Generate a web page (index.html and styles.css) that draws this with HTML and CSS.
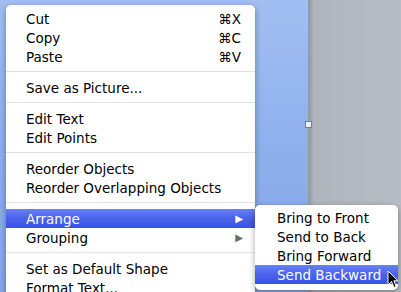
FILE: index.html
```html
<!DOCTYPE html>
<html lang="en">
<head>
    <meta charset="UTF-8">
    <title>Context Menu</title>
    <link rel="stylesheet" href="styles.css">
</head>
<body>
    <div class="desk">
        <div class="slide-area"><span class="handle"></span></div>
        <div class="edge"></div>
        <div class="grey-area"></div>
    </div>

    <ul class="menu">
        <li class="item">Cut<span class="key">&#8984;X</span></li>
        <li class="item">Copy<span class="key">&#8984;C</span></li>
        <li class="item">Paste<span class="key">&#8984;V</span></li>
        <li class="sep"></li>
        <li class="item">Save as Picture...</li>
        <li class="sep"></li>
        <li class="item">Edit Text</li>
        <li class="item">Edit Points</li>
        <li class="sep"></li>
        <li class="item">Reorder Objects</li>
        <li class="item">Reorder Overlapping Objects</li>
        <li class="sep"></li>
        <li class="item active">Arrange<span class="arrow">&#9654;</span></li>
        <li class="item">Grouping<span class="arrow">&#9654;</span></li>
        <li class="sep"></li>
        <li class="item">Set as Default Shape</li>
        <li class="item">Format Text...</li>
    </ul>

    <ul class="menu submenu">
        <li class="item">Bring to Front</li>
        <li class="item">Send to Back</li>
        <li class="item">Bring Forward</li>
        <li class="item active">Send Backward</li>
    </ul>

    <svg class="cursor" width="12" height="19" viewBox="0 0 12 19">
        <path d="M1 1 L1 15 L4.5 11.5 L7 17.5 L9.2 16.6 L6.8 10.8 L11 10.8 Z" fill="#000" stroke="#fff" stroke-width="1"/>
    </svg>
</body>
</html>
```

FILE: styles.css
```css
* { box-sizing: border-box; margin: 0; padding: 0; }
body { width: 401px; height: 292px; overflow: hidden; position: relative; font-family: "DejaVu Sans", "Lucida Grande", sans-serif; font-size: 13.5px; color: #000; }

.desk { display: flex; height: 100%; }
.slide-area {
    position: relative;
    width: 308px;
    background: linear-gradient(to bottom, #a2bff2 0%, #8eb0ec 50%, #84a8e8 100%);
}
.handle {
    position: absolute;
    left: 305px;
    top: 121px;
    width: 7px;
    height: 7px;
    background: #eef2f8;
    border: 1px solid #6f7f98;
    z-index: 2;
}
.edge { width: 5px; background: linear-gradient(to right, #8e96a4, #a8aeb8); }
.grey-area { flex: 1; background: linear-gradient(to right, #b0b4bc, #b8bcc4); }

.menu {
    list-style: none;
    position: absolute;
    left: 6px;
    top: 5px;
    width: 249px;
    padding-top: 4px;
    padding-bottom: 10px;
    background: #fff;
    border-radius: 5px 5px 0 0;
    box-shadow: 0 2px 6px rgba(0,0,0,0.35);
}

.item {
    display: flex;
    align-items: center;
    height: 19px;
    padding-left: 20px;
    padding-right: 14px;
    white-space: nowrap;
}
.key { margin-left: auto; }
.arrow { margin-left: auto; margin-right: -2px; font-size: 10px; color: #6c6c6c; }

.sep { height: 1px; background: #e2e2e2; margin: 5px 0 6px; }

.active {
    color: #fff;
    background: linear-gradient(to bottom, #6a80f2 0%, #4a62ea 50%, #3a52e4 100%);
}
.active .arrow { color: #fff; }

.submenu {
    left: 255px;
    top: 205px;
    width: 143px;
    padding: 3px 0 6px;
    border-radius: 5px;
}
.submenu .item { padding-left: 22px; }

.cursor { position: absolute; left: 387px; top: 270px; }
```
